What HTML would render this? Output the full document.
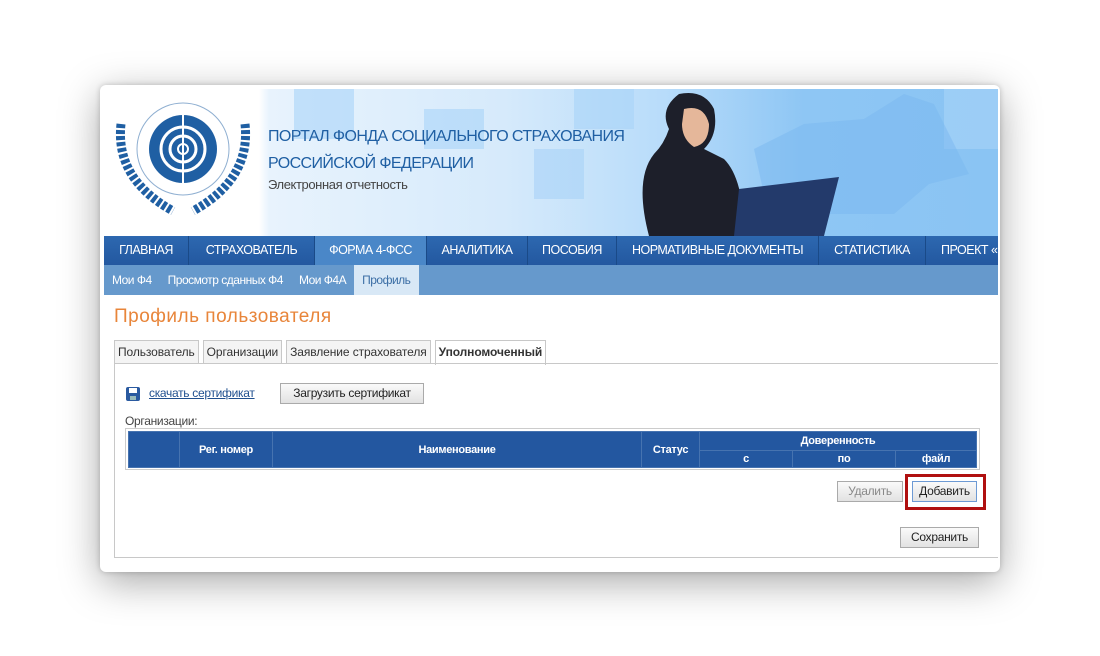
<!DOCTYPE html>
<html><head><meta charset="utf-8"><style>
*{margin:0;padding:0;box-sizing:border-box}
body{width:1100px;height:656px;background:#fff;position:relative;overflow:hidden;font-family:"Liberation Sans",sans-serif}
.card{position:absolute;left:100px;top:85px;width:900px;height:487px;background:#fff;border-radius:6px;box-shadow:0 10px 40px rgba(0,0,0,.35),0 0 6px rgba(0,0,0,.2);overflow:hidden}
.hdr{position:absolute;left:4px;top:4px;width:894px;height:147px;background:linear-gradient(90deg,#fff 0,#fff 155px,#e8f3fd 165px,#d6eafb 400px,#b8dcfa 560px,#8ec6f4 700px,#8ac4f3 894px)}
.t1{position:absolute;left:164px;top:34px;color:#1f5fa3;font-size:16px;line-height:27px;letter-spacing:-.6px}
.t2{position:absolute;left:164px;top:88px;color:#444;font-size:13px;letter-spacing:-.4px}
.nav{position:absolute;left:4px;top:151px;width:894px;height:29px;background:linear-gradient(#2d68b0,#2358a0);display:flex}
.nav div{color:#fff;font-size:12.5px;line-height:29px;text-align:center;border-right:1px solid #1a4a88;white-space:nowrap;overflow:hidden;letter-spacing:-.5px}
.nav .a{background:#4a87c8}
.sub{position:absolute;left:4px;top:180px;width:894px;height:30px;background:#6699cc;display:flex}
.sub div{color:#fff;font-size:12px;line-height:30px;padding:0 8px;white-space:nowrap;letter-spacing:-.5px}
.sub .a{background:#d8e8f6;color:#3b6ea5;padding:0 8px;width:65px}
h1{position:absolute;left:14px;top:221px;font-weight:normal;color:#e8853a;font-size:19px;letter-spacing:.5px}
.tabs{position:absolute;left:14px;top:255px;display:flex;gap:4px}
.tabs div{border:1px solid #c8c8c8;border-bottom:none;background:#f4f4f4;font-size:12px;color:#333;padding:0 3px;height:24px;line-height:23px;letter-spacing:-.1px}
.tabs .a{background:#fff;font-weight:bold;height:25px}
.tline{position:absolute;left:14px;top:278px;width:884px;border-top:1px solid #c8c8c8}
.box{position:absolute;left:14px;top:278px;width:884px;height:195px;border-left:1px solid #c8c8c8;border-bottom:1px solid #c8c8c8}
.btn{position:absolute;border:1px solid #aaa;background:linear-gradient(#fafafa,#e2e2e2);font-size:12px;color:#222;text-align:center;line-height:19px;height:21px;letter-spacing:-.3px}
table{border-collapse:collapse;position:absolute;left:28px;top:346px;width:849px}
th{background:#2357a0;color:#fff;font-size:11px;font-weight:bold;border:1px solid #4673b0;padding:0;letter-spacing:-.3px}
</style></head><body>
<div class="card">
<div class="hdr">
<svg width="894" height="147" style="position:absolute;left:0;top:0">
<g fill="#a9d3f8" opacity=".6"><rect x="190" y="0" width="60" height="50"/><rect x="320" y="20" width="60" height="40"/><rect x="430" y="60" width="50" height="50"/><rect x="470" y="0" width="60" height="40"/><rect x="840" y="0" width="54" height="60"/></g>
<path d="M650 60 L700 35 L760 30 L800 5 L830 15 L845 45 L865 85 L825 95 L790 125 L700 125 L660 105 Z" fill="#7ab8ef" opacity=".5"/>
<g transform="translate(79,60)" fill="#1f5fa3">
<circle r="46" fill="none" stroke="#1f5fa3" stroke-width="1" opacity=".5"/>
<circle r="34"/>
<rect x="-1" y="-36" width="2" height="72" fill="#fff"/>
<circle r="22" fill="none" stroke="#fff" stroke-width="3"/>
<circle r="13" fill="none" stroke="#fff" stroke-width="3"/>
<circle r="5" fill="none" stroke="#fff" stroke-width="2"/>
<path d="M-62-25Q-68 30-10 62M62-25Q68 30 10 62" fill="none" stroke="#1f5fa3" stroke-width="9" stroke-dasharray="4 2"/>
</g>
<path d="M575 5 Q600 0 610 20 Q615 45 600 60 L620 70 Q640 90 640 147 L545 147 Q530 90 550 65 Q560 55 565 40 Q555 20 575 5Z" fill="#1d1f2a"/>
<path d="M580 20 Q600 15 605 35 Q605 55 590 58 Q578 50 578 35Z" fill="#e5b79a"/>
<path d="M635 100 L735 88 L720 147 L630 147Z" fill="#233a6b"/>
</svg>
<div class="t1">ПОРТАЛ ФОНДА СОЦИАЛЬНОГО СТРАХОВАНИЯ<br>РОССИЙСКОЙ ФЕДЕРАЦИИ</div>
<div class="t2">Электронная отчетность</div>
</div>
<div class="nav"><div style="width:85px">ГЛАВНАЯ</div><div style="width:126px">СТРАХОВАТЕЛЬ</div><div class="a" style="width:112px">ФОРМА 4-ФСС</div><div style="width:101px">АНАЛИТИКА</div><div style="width:89px">ПОСОБИЯ</div><div style="width:202px">НОРМАТИВНЫЕ ДОКУМЕНТЫ</div><div style="width:107px">СТАТИСТИКА</div><div style="width:72px;text-align:left;padding-left:15px;border:none">ПРОЕКТ «</div></div>
<div class="sub"><div>Мои Ф4</div><div>Просмотр сданных Ф4</div><div>Мои Ф4А</div><div class="a">Профиль</div></div>
<h1>Профиль пользователя</h1>
<div class="tabs"><div>Пользователь</div><div>Организации</div><div>Заявление страхователя</div><div class="a">Уполномоченный</div></div>
<div class="tline"></div>
<div class="box"></div>
<svg width="14" height="14" style="position:absolute;left:26px;top:302px"><rect width="14" height="14" rx="2" fill="#2a5aa0"/><rect x="3" y="1" width="8" height="5" fill="#fff"/><rect x="4" y="9" width="6" height="4" fill="#9bb"/></svg>
<div style="position:absolute;left:49px;top:301px;font-size:12px;color:#1f4f8f;text-decoration:underline;letter-spacing:-.3px">скачать сертификат</div>
<div class="btn" style="left:180px;top:298px;width:144px">Загрузить сертификат</div>
<div style="position:absolute;left:25px;top:329px;font-size:12px;color:#444;letter-spacing:-.3px">Организации:</div>
<div style="position:absolute;left:25px;top:343px;width:855px;height:42px;border:1px solid #ccc"></div>
<table><tr style="height:19px"><th rowspan="2" style="width:51px"></th><th rowspan="2" style="width:93px">Рег. номер</th><th rowspan="2" style="width:369px">Наименование</th><th rowspan="2" style="width:58px">Статус</th><th colspan="3">Доверенность</th></tr><tr style="height:17px"><th style="width:93px">с</th><th style="width:103px">по</th><th>файл</th></tr></table>
<div class="btn" style="left:737px;top:396px;width:66px;color:#888">Удалить</div>
<div style="position:absolute;left:805px;top:389px;width:81px;height:36px;border:3px solid #b01010"></div>
<div class="btn" style="left:812px;top:396px;width:65px;border-color:#6d9ad4">Добавить</div>
<div class="btn" style="left:800px;top:442px;width:79px">Сохранить</div>
</div>
</body></html>
